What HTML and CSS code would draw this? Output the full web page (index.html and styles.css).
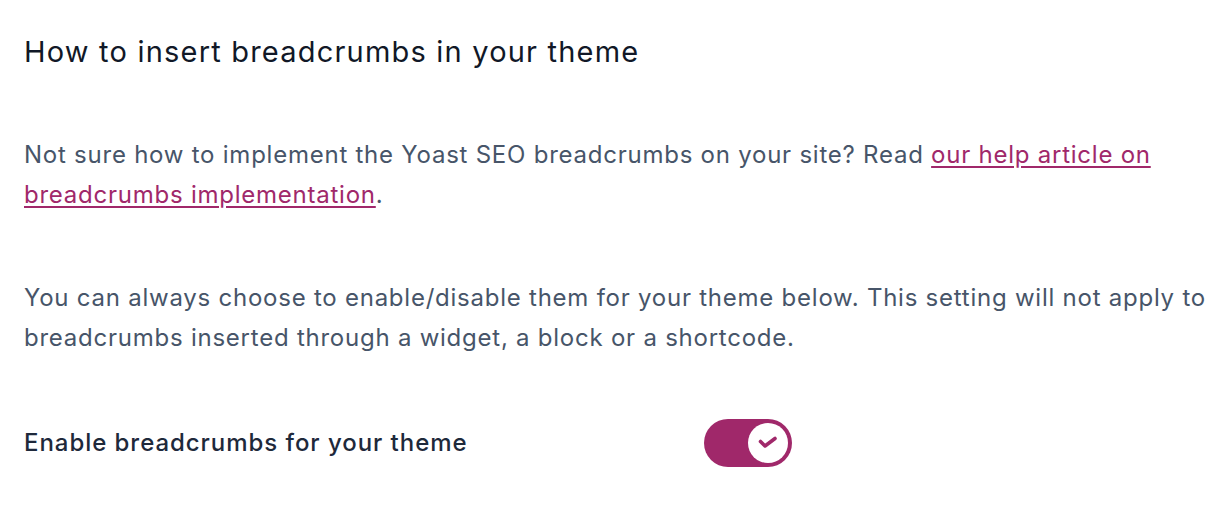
FILE: index.html
```html
<!DOCTYPE html>
<html lang="en">
<head>
<meta charset="utf-8">
<title>Breadcrumbs</title>
<link rel="stylesheet" href="styles.css">
</head>
<body>
<main class="section">
  <h2 class="title">How to insert breadcrumbs in your theme</h2>
  <p class="text">Not sure how to implement the Yoast SEO breadcrumbs on your site? Read <a class="link" href="#">our help article on breadcrumbs implementation</a>.</p>
  <p class="text">You can always choose to enable/disable them for your theme below. This setting will not apply to breadcrumbs inserted through a widget, a block or a shortcode.</p>
  <div class="toggle-row">
    <span class="label">Enable breadcrumbs for your theme</span>
    <button class="toggle" type="button" aria-pressed="true">
      <span class="knob">
        <svg class="check" viewBox="0 0 40 40" aria-hidden="true"><polyline points="12.5,18.5 17,23 27,15.5" fill="none" stroke="currentColor" stroke-width="3.6" stroke-linecap="round" stroke-linejoin="round"/></svg>
      </span>
    </button>
  </div>
</main>
</body>
</html>
```
FILE: styles.css
```css
html, body {
  margin: 0;
  padding: 0;
  background: #ffffff;
}
body {
  font-family: Inter, "Noto Sans", sans-serif;
}
.section {
  padding: 32px 0 32px 24px;
}
.title {
  margin: 0;
  font-size: 29px;
  line-height: 40px;
  font-weight: 400;
  letter-spacing: 1.2px;
  color: #111827;
}
.text {
  margin: 63px 0 0;
  font-size: 24px;
  line-height: 40px;
  letter-spacing: 0.76px;
  color: #475569;
}
.link {
  color: #a0286a;
  text-decoration: underline;
  text-underline-offset: 3px;
}
.toggle-row {
  margin-top: 61px;
  display: flex;
  align-items: center;
}
.label {
  width: 680px;
  font-size: 24px;
  line-height: 40px;
  font-weight: 500;
  letter-spacing: 0.95px;
  color: #1e293b;
}
.toggle {
  width: 88px;
  height: 48px;
  border: 0;
  padding: 4px;
  border-radius: 24px;
  background: #a0286a;
  display: flex;
  justify-content: flex-end;
  align-items: center;
  cursor: pointer;
}
.knob {
  width: 40px;
  height: 40px;
  border-radius: 50%;
  background: #ffffff;
  display: flex;
  color: #a0286a;
}
.check {
  width: 40px;
  height: 40px;
}
```
